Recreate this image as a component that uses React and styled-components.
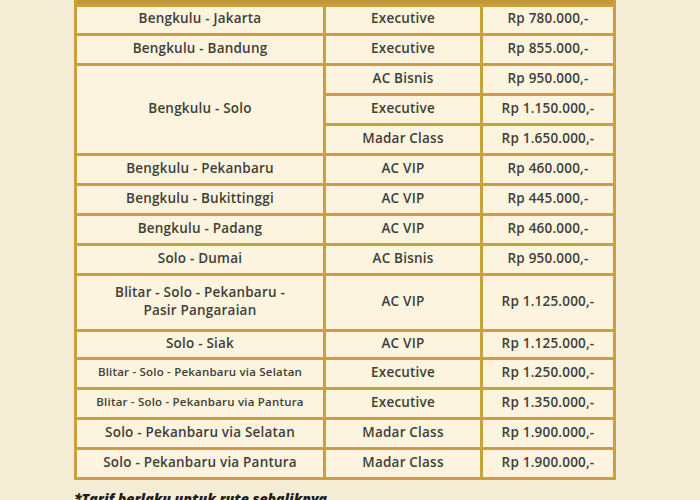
import React from "react";
import styled, { createGlobalStyle } from "styled-components";

const GlobalStyle = createGlobalStyle`
  html, body {
    margin: 0;
    padding: 0;
    height: 500px;
    overflow: hidden;
    background: #f5ecd5;
  }
  body {
    font-family: "Open Sans", "DejaVu Sans", sans-serif;
  }
`;

const Page = styled.div`
  width: 700px;
  height: 500px;
  background: #f5ecd5;
  padding-left: 74px;
  box-sizing: border-box;
`;

const Grid = styled.div`
  display: grid;
  width: 542px;
  box-sizing: border-box;
  grid-template-columns: 246px 154px 130px;
  grid-template-rows: 4px 26px 27px 27px 27px 27px 27px 27px 27px 27px 53px 25px 27px 27px 27px 27px;
  gap: 3px;
  padding: 0 3px 3px;
  background: #c8a03c;
`;

const Header = styled.div`
  grid-column: 1 / -1;
  background: #c39735;
`;

const Cell = styled.div`
  background: #fcf4df;
  display: flex;
  align-items: center;
  justify-content: center;
  text-align: center;
  color: #413e37;
  font-size: ${(p) => (p.$small ? "11.5px" : "13.5px")};
  font-weight: 600;
  letter-spacing: 0.2px;
  line-height: 1.3;
  grid-row: ${(p) => (p.$span ? `span ${p.$span}` : "auto")};
  padding-bottom: 2px;
`;

const Note = styled.div`
  margin-top: 9px;
  font-family: "Open Sans", sans-serif;
  font-size: 14px;
  font-weight: 800;
  font-style: italic;
  color: #1f1d1a;
`;

const rows = [
  { route: "Bengkulu - Jakarta", fares: [["Executive", "Rp 780.000,-"]] },
  { route: "Bengkulu - Bandung", fares: [["Executive", "Rp 855.000,-"]] },
  {
    route: "Bengkulu - Solo",
    fares: [
      ["AC Bisnis", "Rp 950.000,-"],
      ["Executive", "Rp 1.150.000,-"],
      ["Madar Class", "Rp 1.650.000,-"],
    ],
  },
  { route: "Bengkulu - Pekanbaru", fares: [["AC VIP", "Rp 460.000,-"]] },
  { route: "Bengkulu - Bukittinggi", fares: [["AC VIP", "Rp 445.000,-"]] },
  { route: "Bengkulu - Padang", fares: [["AC VIP", "Rp 460.000,-"]] },
  { route: "Solo - Dumai", fares: [["AC Bisnis", "Rp 950.000,-"]] },
  {
    route: (
      <>
        Blitar - Solo - Pekanbaru -<br />
        Pasir Pangaraian
      </>
    ),
    fares: [["AC VIP", "Rp 1.125.000,-"]],
  },
  { route: "Solo - Siak", fares: [["AC VIP", "Rp 1.125.000,-"]] },
  { route: "Blitar - Solo - Pekanbaru via Selatan", small: true, fares: [["Executive", "Rp 1.250.000,-"]] },
  { route: "Blitar - Solo - Pekanbaru via Pantura", small: true, fares: [["Executive", "Rp 1.350.000,-"]] },
  { route: "Solo - Pekanbaru via Selatan", fares: [["Madar Class", "Rp 1.900.000,-"]] },
  { route: "Solo - Pekanbaru via Pantura", fares: [["Madar Class", "Rp 1.900.000,-"]] },
];

export default function App() {
  return (
    <>
      <GlobalStyle />
      <Page>
        <Grid>
          <Header />
          {rows.map((r, i) => (
            <React.Fragment key={i}>
              <Cell $span={r.fares.length > 1 ? r.fares.length : 0} $small={r.small}>
                {r.route}
              </Cell>
              {r.fares.map(([cls, price], j) => (
                <React.Fragment key={j}>
                  <Cell>{cls}</Cell>
                  <Cell>{price}</Cell>
                </React.Fragment>
              ))}
            </React.Fragment>
          ))}
        </Grid>
        <Note>*Tarif berlaku untuk rute sebaliknya</Note>
      </Page>
    </>
  );
}
